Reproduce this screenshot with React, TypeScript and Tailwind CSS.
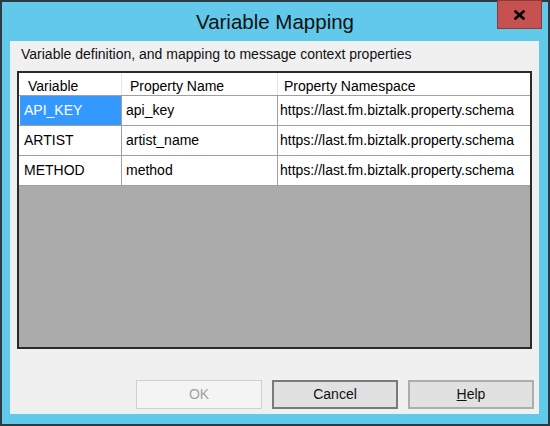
import React from 'react'

interface Mapping {
  variable: string
  property: string
  ns: string
}

const rows: Mapping[] = [
  { variable: 'API_KEY', property: 'api_key', ns: 'https://last.fm.biztalk.property.schema' },
  { variable: 'ARTIST', property: 'artist_name', ns: 'https://last.fm.biztalk.property.schema' },
  { variable: 'METHOD', property: 'method', ns: 'https://last.fm.biztalk.property.schema' },
]

const font = { fontFamily: '"Liberation Sans", Arial, sans-serif' }

export default function App() {
  return (
    <div
      className="relative w-[550px] h-[426px] bg-[#62c9ea] border-2 border-[#2c3a42] flex flex-col text-black"
      style={font}
    >
      {/* title bar */}
      <div className="h-[39px] flex items-center justify-center">
        <span className="text-[20.5px] text-[#111] mt-[1px]">Variable Mapping</span>
      </div>
      <div className="absolute top-[-2px] right-[6px] w-[45px] h-[29px] bg-[#c75050] border border-[#8a3a3a] flex items-center justify-center">
        <svg width="11" height="10" viewBox="0 0 11 10">
          <path d="M1.5 1.5 L9.5 8.5 M9.5 1.5 L1.5 8.5" stroke="#000" strokeWidth="2.6" strokeLinecap="square" />
        </svg>
      </div>

      {/* client area */}
      <div className="flex-1 ml-[8px] mr-[9px] mb-[10px] bg-[#f0f0f0] border border-[#e4f3f9] flex flex-col">
        <div className="h-[29px] pl-[10px] pt-[2px] text-[14px] text-[#111]">
          Variable definition, and mapping to message context properties
        </div>

        <div className="mx-[6px] h-[278px] border-2 border-[#2a2a2a] bg-[#ababab] overflow-hidden">
          <div className="flex h-[23px] bg-white border-b border-[#a0a0a0] text-[14px] pl-[1px]">
            <div className="w-[102px] pl-[8px] pt-[3px] border-r border-[#e5e5e5]">Variable</div>
            <div className="w-[156px] pl-[8px] pt-[3px] border-r border-[#e5e5e5]">Property Name</div>
            <div className="flex-1 pl-[6px] pt-[3px]">Property Namespace</div>
          </div>
          {rows.map((r, i) => (
            <div key={r.variable} className="flex h-[30px] bg-white border-b border-[#a0a0a0] text-[14px] pl-[1px]">
              <div
                className={
                  i === 0
                    ? 'w-[102px] pl-[4px] flex items-center bg-[#3399ff] text-white border-r border-[#a0a0a0]'
                    : 'w-[102px] pl-[4px] flex items-center border-r border-[#a0a0a0]'
                }
              >
                {r.variable}
              </div>
              <div className="w-[156px] pl-[4px] flex items-center border-r border-[#a0a0a0]">{r.property}</div>
              <div className="flex-1 pl-[2px] flex items-center whitespace-nowrap overflow-hidden">{r.ns}</div>
            </div>
          ))}
        </div>

        <div className="flex-1 flex items-end justify-end gap-[10px] pr-[4px] pb-[4px] text-[14px]">
          <button className="w-[126px] h-[29px] bg-[#f4f4f4] border border-[#cfcfcf] text-[#a2a2a2]">OK</button>
          <button className="w-[126px] h-[29px] bg-[#e1e1e1] border-2 border-[#7a7a7a] text-[#111]">Cancel</button>
          <button className="w-[126px] h-[29px] bg-[#e1e1e1] border-2 border-[#adadad] text-[#111]">
            <span className="underline">H</span>elp
          </button>
        </div>
      </div>
    </div>
  )
}
